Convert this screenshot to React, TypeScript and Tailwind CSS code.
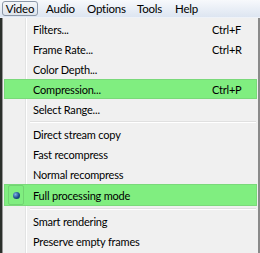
import React from "react";

type Item = { label: string; shortcut?: string; hot?: boolean; radio?: boolean; h?: string };

const groups: Item[][] = [
  [
    { label: "Filters...", shortcut: "Ctrl+F" },
    { label: "Frame Rate...", shortcut: "Ctrl+R" },
    { label: "Color Depth..." },
    { label: "Compression...", shortcut: "Ctrl+P", hot: true },
    { label: "Select Range..." },
  ],
  [
    { label: "Direct stream copy" },
    { label: "Fast recompress" },
    { label: "Normal recompress" },
    { label: "Full processing mode", hot: true, radio: true, h: "h-[22px]" },
  ],
  [{ label: "Smart rendering" }, { label: "Preserve empty frames" }],
];

const MenuRow = ({ item }: { item: Item }) => (
  <div
    className={`relative flex items-center ${item.h ?? "h-[20px]"} ${
      item.hot ? "bg-[#80ee80] border border-[#7ad97a]" : "border border-transparent"
    }`}
  >
    <div className="w-[22px] h-full flex items-center pl-[3px]">
      {item.radio && (
        <div className="w-[16px] h-[20px] border border-[#72d472] rounded-[2px] flex items-center justify-center">
          <div className="w-[7px] h-[7px] rounded-full bg-[radial-gradient(circle_at_35%_35%,#7fb3e6,#1d4e8c_55%,#0c2a52)]" />
        </div>
      )}
    </div>
    <div className="flex-1 pl-[6px] text-black">{item.label}</div>
    <div className="w-[44px] text-black">{item.shortcut}</div>
  </div>
);

const Separator = () => (
  <div className="h-[5px] flex flex-col justify-center pl-[26px] pr-[1px]">
    <div className="h-[1px] bg-[#e0e0e0]" />
    <div className="h-[1px] bg-white" />
  </div>
);

export default function App() {
  return (
    <div
      className="w-[260px] h-[253px] overflow-hidden bg-[#2b302b] text-[11px] tracking-[-0.2px] leading-none"
      style={{ fontFamily: 'Lato, "Liberation Sans", sans-serif' }}
    >
      {/* menu bar */}
      <div className="h-[18px] flex items-center bg-gradient-to-b from-[#f7f9fc] to-[#dde5f1] border-b border-[#eef2f8] text-black text-[11.5px] tracking-[-0.2px]">
        <div className="ml-[2px] h-[15px] w-[36px] flex items-center justify-center border border-[#8c98a8] rounded-[3px] bg-gradient-to-b from-[#f4f6f9] to-[#dfe4eb]">
          Video
        </div>
        <div className="ml-[8px] w-[41px]">Audio</div>
        <div className="w-[50px]">Options</div>
        <div className="w-[38px]">Tools</div>
        <div>Help</div>
      </div>

      {/* dropdown */}
      <div className="ml-[2px] w-[258px] h-[235px] bg-[#f0f0f0] border-l border-[#979797] border-r-2 border-r-[#8a8a8a] relative">
        <div className="absolute left-[22px] top-0 bottom-0 w-[2px] flex">
          <div className="w-[1px] bg-[#e2e3e3]" />
          <div className="w-[1px] bg-white" />
        </div>
        <div className="relative pt-[1px] pl-[1px] pr-[1px]">
          {groups.map((g, i) => (
            <React.Fragment key={i}>
              {i > 0 && <Separator />}
              {g.map((it) => (
                <MenuRow key={it.label} item={it} />
              ))}
            </React.Fragment>
          ))}
        </div>
      </div>
    </div>
  );
}
